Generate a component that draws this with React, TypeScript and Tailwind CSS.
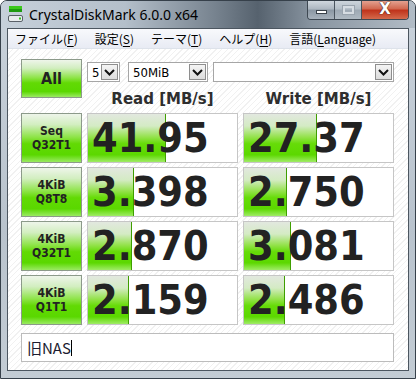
import React from 'react';

const rows = [
  { l1: 'Seq', l2: 'Q32T1', read: '41.95', readFill: 78, write: '27.37', writeFill: 73 },
  { l1: '4KiB', l2: 'Q8T8', read: '3.398', readFill: 46, write: '2.750', writeFill: 43 },
  { l1: '4KiB', l2: 'Q32T1', read: '2.870', readFill: 44, write: '3.081', writeFill: 47 },
  { l1: '4KiB', l2: 'Q1T1', read: '2.159', readFill: 41, write: '2.486', writeFill: 41 },
];

const menus = [
  { pre: 'ファイル(', key: 'F', post: ')' },
  { pre: '設定(', key: 'S', post: ')' },
  { pre: 'テーマ(', key: 'T', post: ')' },
  { pre: 'ヘルプ(', key: 'H', post: ')' },
  { pre: '言語(', key: 'L', post: 'anguage)' },
];

const greenBtn =
  'bg-[linear-gradient(to_bottom,#eef5ea_0%,#d2eec0_22%,#8ee448_48%,#62da04_62%,#5ad800_85%,#9aea62_100%)] border border-[#8c9a8a]';

const Chevron = () => (
  <svg width="11" height="7" viewBox="0 0 11 7">
    <polyline points="1,1 5.5,5.5 10,1" fill="none" stroke="#111" strokeWidth="2" />
  </svg>
);

const Combo = ({ w, text }: { w: string; text?: string }) => (
  <div className={`${w} h-[20px] bg-white border border-[#a6a6a6] flex items-center`}>
    <span className="flex-1 pl-[4px] text-[13px] leading-none text-black" style={{ fontFamily: "'DejaVu Sans Condensed', 'DejaVu Sans', sans-serif" }}>
      {text}
    </span>
    <div className="w-[17px] h-[16px] mr-[1px] border border-[#8e8e8e] bg-[linear-gradient(to_bottom,#f4f4f4,#dcdcdc)] flex items-center justify-center">
      <Chevron />
    </div>
  </div>
);

const Result = ({ value, fill }: { value: string; fill: number }) => (
  <div className="relative w-[151px] h-[50px] bg-white border border-[#c6c6c6] flex items-center overflow-hidden">
    <div
      className="absolute left-0 top-0 bottom-0 bg-[linear-gradient(to_bottom,#e2e8df_0%,#d4ebc4_25%,#94e24c_48%,#66dc08_62%,#5cd800_85%,#a0ec66_100%)] border-r border-[#3f9e00]"
      style={{ width: fill }}
    />
    <span
      className="relative pl-[4px] text-[41px] font-bold leading-none text-[#222]"
      style={{ fontFamily: "'DejaVu Sans Condensed', 'DejaVu Sans', sans-serif" }}
    >
      {value}
    </span>
  </div>
);

export default function App() {
  return (
    <div className="w-[416px] h-[379px] flex flex-col border border-[#36404a] rounded-t-[7px] overflow-hidden bg-[linear-gradient(to_bottom,#c9d2db,#b9c3cd_60%,#c3ccd4)]">
      {/* title bar */}
      <div className="h-[27px] flex items-start bg-[linear-gradient(to_right,#c6d0da_0%,#b4bfca_30%,#76828e_52%,#56626e_62%,#8894a0_75%,#b2bcc6_100%)]">
        <svg width="16" height="18" viewBox="0 0 16 18" className="ml-[7px] mt-[4px]">
          <rect x="1" y="1" width="13" height="3" fill="#3cc81c" />
          <rect x="1" y="4" width="13" height="3" fill="#1e9a10" />
          <rect x="0.5" y="10.5" width="14" height="6" rx="1.5" fill="#e8ecee" stroke="#5a6068" />
          <rect x="11" y="12.5" width="2" height="2" fill="#34c020" />
        </svg>
        <span className="ml-[5px] mt-[5px] text-[14px] leading-[17px] text-black" style={{ fontFamily: "'Noto Sans', sans-serif" }}>
          CrystalDiskMark 6.0.0 x64
        </span>
        <div className="ml-auto mr-[6px] -mt-px flex h-[20px] border border-[#3e4852] border-t-0 rounded-b-[4px] overflow-hidden">
          <div className="w-[27px] h-full flex items-center justify-center bg-[linear-gradient(to_bottom,#d4dbe2,#aeb8c2_45%,#8c98a4_55%,#a8b2bc)] border-r border-[#4a545e]">
            <div className="w-[11px] h-[4px] mt-[5px] bg-white border border-[#3a424a]" />
          </div>
          <div className="w-[27px] h-full flex items-center justify-center bg-[linear-gradient(to_bottom,#d0d7de,#b6c0c9_45%,#9ea9b4_55%,#b0bac3)] border-r border-[#4a545e]">
            <div className="w-[11px] h-[8px] border-2 border-[#d6dce2] outline outline-1 outline-[#9aa4ae]" />
          </div>
          <div className="w-[46px] h-full flex items-center justify-center bg-[linear-gradient(to_bottom,#e6a898,#d26a52_45%,#c0341c_55%,#d46a4c)]">
            <span className="text-[15px] font-bold leading-none text-white [text-shadow:0_0_1px_#3a1a10,0_0_1px_#3a1a10]" style={{ fontFamily: "'DejaVu Sans', sans-serif" }}>
              X
            </span>
          </div>
        </div>
      </div>

      {/* client */}
      <div className="mx-[6px] h-[343px] border border-[#4c5660] flex flex-col">
        {/* menu */}
        <div className="h-[20px] flex items-center pl-[7px] gap-[17px] bg-[linear-gradient(to_bottom,#f8f9fc,#e8ebf4)] border-b border-[#dde2ea]">
          {menus.map((m) => (
            <span key={m.key} className="text-[12px] leading-none text-black" style={{ fontFamily: "'Noto Sans CJK JP', sans-serif" }}>
              {m.pre}
              <span className="underline underline-offset-2">{m.key}</span>
              {m.post}
            </span>
          ))}
        </div>

        <div className="flex-1 pt-[10px] pl-[13px] flex flex-col bg-[repeating-linear-gradient(135deg,#ffffff_0px,#ffffff_3px,#f1f1f1_3px,#f1f1f1_4px)]">
          {/* top */}
          <div className="flex h-[54px] gap-[5px]">
            <div className={`w-[61px] h-[39px] ${greenBtn} flex items-center justify-center`}>
              <span className="text-[16px] font-bold text-[#222]" style={{ fontFamily: "'DejaVu Sans Condensed', 'DejaVu Sans', sans-serif" }}>
                All
              </span>
            </div>
            <div className="flex flex-col">
              <div className="flex mt-[3px]">
                <Combo w="w-[33px]" text="5" />
                <div className="ml-[8px]">
                  <Combo w="w-[80px]" text="50MiB" />
                </div>
                <div className="ml-[5px]">
                  <Combo w="w-[181px]" />
                </div>
              </div>
              <div className="flex mt-[8px] gap-[5px]">
                {['Read [MB/s]', 'Write [MB/s]'].map((h) => (
                  <div key={h} className="w-[151px] text-center text-[15px] font-bold leading-[18px] text-[#2e2e2e]" style={{ fontFamily: "'DejaVu Sans', sans-serif" }}>
                    {h}
                  </div>
                ))}
              </div>
            </div>
          </div>

          {/* rows */}
          <div className="flex flex-col gap-[4px]">
            {rows.map((r, i) => (
              <div key={i} className="flex gap-[5px]">
                <div className={`w-[61px] h-[50px] ${greenBtn} flex flex-col items-center justify-center`}>
                  <span className="text-[12px] font-bold leading-[14px] text-[#222]" style={{ fontFamily: "'DejaVu Sans Condensed', 'DejaVu Sans', sans-serif" }}>
                    {r.l1}
                  </span>
                  <span className="text-[12px] font-bold leading-[14px] text-[#222]" style={{ fontFamily: "'DejaVu Sans Condensed', 'DejaVu Sans', sans-serif" }}>
                    {r.l2}
                  </span>
                </div>
                <Result value={r.read} fill={r.readFill} />
                <Result value={r.write} fill={r.writeFill} />
              </div>
            ))}
          </div>

          {/* comment */}
          <div className="mt-[8px] w-[373px] h-[29px] bg-white border border-[#bcbcbc] flex items-center pl-[5px]">
            <span className="text-[15px] leading-none text-[#1c1c30]" style={{ fontFamily: "'Noto Sans CJK JP', sans-serif" }}>
              旧NAS
            </span>
            <span className="w-px h-[16px] bg-black" />
          </div>
        </div>
      </div>
    </div>
  );
}
